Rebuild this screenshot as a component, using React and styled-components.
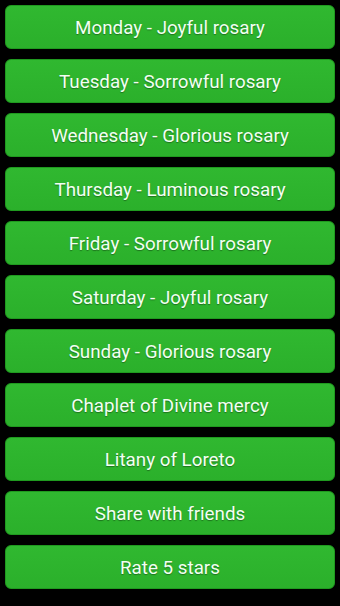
import React from "react";
import styled, { createGlobalStyle } from "styled-components";

const GlobalStyle = createGlobalStyle`
  html, body {
    margin: 0;
    padding: 0;
    background: #000;
  }
  body {
    font-family: Roboto, "Liberation Sans", sans-serif;
  }
`;

const items = [
  "Monday - Joyful rosary",
  "Tuesday - Sorrowful rosary",
  "Wednesday - Glorious rosary",
  "Thursday - Luminous rosary",
  "Friday - Sorrowful rosary",
  "Saturday - Joyful rosary",
  "Sunday - Glorious rosary",
  "Chaplet of Divine mercy",
  "Litany of Loreto",
  "Share with friends",
  "Rate 5 stars",
];

export default function App() {
  return (
    <>
      <GlobalStyle />
      <Screen>
        <Menu>
          {items.map((label) => (
            <MenuButton key={label}>{label}</MenuButton>
          ))}
        </Menu>
      </Screen>
    </>
  );
}

const Screen = styled.div`
  width: 340px;
  height: 606px;
  background: #000;
  box-sizing: border-box;
  padding: 5px;
`;

const Menu = styled.div`
  display: flex;
  flex-direction: column;
  gap: 10px;
`;

const MenuButton = styled.button`
  height: 44px;
  width: 100%;
  box-sizing: border-box;
  border: 1px solid #1f9a1f;
  border-radius: 6px;
  background: linear-gradient(#30b830, #2bb02b);
  color: #f2fff2;
  font-family: Roboto, "Liberation Sans", sans-serif;
  font-size: 18.8px;
  font-weight: 400;
  text-shadow: 0 1px 1px rgba(0, 0, 0, 0.35);
  cursor: pointer;
  padding: 2px 0 0;
`;
